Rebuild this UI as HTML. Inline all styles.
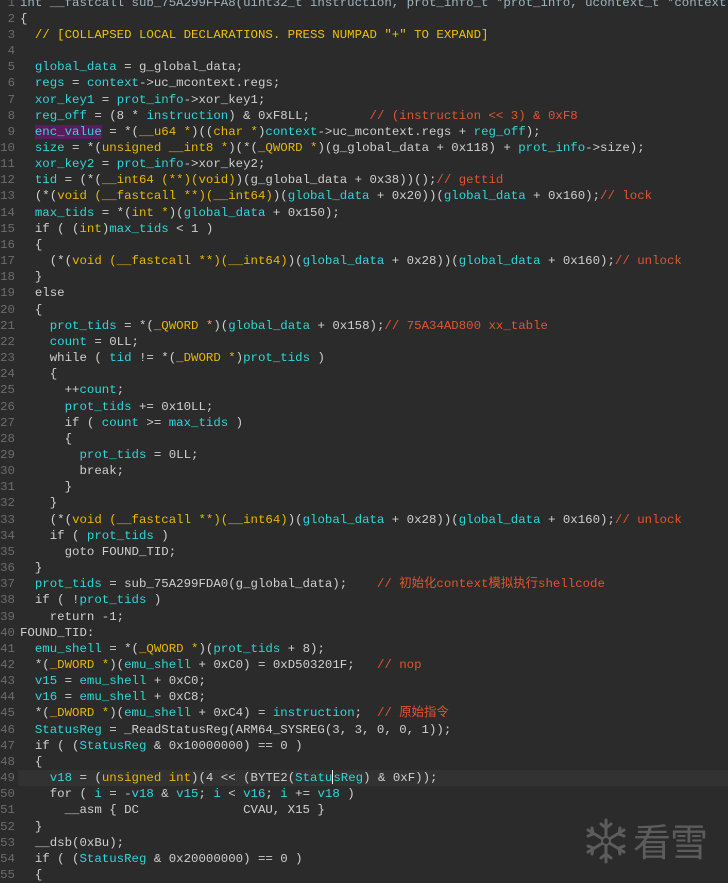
<!DOCTYPE html>
<html><head><meta charset="utf-8"><style>
html,body{margin:0;padding:0;background:#2b2b2b;width:728px;height:882px;overflow:hidden}
.g{position:absolute;left:0;top:-5.4px;width:15px;text-align:right;font:12.4px/16.15px "Liberation Mono",monospace;color:#6c6c6c;white-space:pre}
.code{position:absolute;left:20px;top:-5.4px;font:12.4px/16.15px "Liberation Mono","Noto Sans CJK SC",monospace;color:#cfcfcf;white-space:pre}
.c{color:#2fd6d8}.y{color:#e6b800}.r{color:#e0552f}.k{color:#f0c000}.h{color:#9fb4c0}
.p{background:#5a1c5c}
.hl{position:absolute;left:18px;top:769.9px;width:710px;height:16px;background:#323232}
.cur{display:inline-block;width:0;height:14px;border-left:1px solid #fff;vertical-align:-3px}
</style></head><body>
<div class="hl"></div>
<div class="g">1
2
3
4
5
6
7
8
9
10
11
12
13
14
15
16
17
18
19
20
21
22
23
24
25
26
27
28
29
30
31
32
33
34
35
36
37
38
39
40
41
42
43
44
45
46
47
48
49
50
51
52
53
54
55</div>
<div class="code"><span class="h">int __fastcall sub_75A299FFA8(uint32_t instruction, prot_info_t *prot_info, ucontext_t *context)</span>
{
  <span class="k">// [COLLAPSED LOCAL DECLARATIONS. PRESS NUMPAD "+" TO EXPAND]</span>

  <span class="c">global_data</span> = g_global_data;
  <span class="c">regs</span> = <span class="c">context</span>-&gt;uc_mcontext.regs;
  <span class="c">xor_key1</span> = <span class="c">prot_info</span>-&gt;xor_key1;
  <span class="c">reg_off</span> = (8 * <span class="c">instruction</span>) &amp; 0xF8LL;        <span class="r">// (instruction &lt;&lt; 3) &amp; 0xF8</span>
  <span class="c p">enc_value</span> = *(<span class="y">__u64 *</span>)((<span class="y">char *</span>)<span class="c">context</span>-&gt;uc_mcontext.regs + <span class="c">reg_off</span>);
  <span class="c">size</span> = *(<span class="y">unsigned __int8 *</span>)(*(<span class="y">_QWORD *</span>)(g_global_data + 0x118) + <span class="c">prot_info</span>-&gt;size);
  <span class="c">xor_key2</span> = <span class="c">prot_info</span>-&gt;xor_key2;
  <span class="c">tid</span> = (*(<span class="y">__int64 (**)(void)</span>)(g_global_data + 0x38))();<span class="r">// gettid</span>
  (*(<span class="y">void (__fastcall **)(__int64)</span>)(<span class="c">global_data</span> + 0x20))(<span class="c">global_data</span> + 0x160);<span class="r">// lock</span>
  <span class="c">max_tids</span> = *(<span class="y">int *</span>)(<span class="c">global_data</span> + 0x150);
  if ( (<span class="y">int</span>)<span class="c">max_tids</span> &lt; 1 )
  {
    (*(<span class="y">void (__fastcall **)(__int64)</span>)(<span class="c">global_data</span> + 0x28))(<span class="c">global_data</span> + 0x160);<span class="r">// unlock</span>
  }
  else
  {
    <span class="c">prot_tids</span> = *(<span class="y">_QWORD *</span>)(<span class="c">global_data</span> + 0x158);<span class="r">// 75A34AD800 xx_table</span>
    <span class="c">count</span> = 0LL;
    while ( <span class="c">tid</span> != *(<span class="y">_DWORD *</span>)<span class="c">prot_tids</span> )
    {
      ++<span class="c">count</span>;
      <span class="c">prot_tids</span> += 0x10LL;
      if ( <span class="c">count</span> &gt;= <span class="c">max_tids</span> )
      {
        <span class="c">prot_tids</span> = 0LL;
        break;
      }
    }
    (*(<span class="y">void (__fastcall **)(__int64)</span>)(<span class="c">global_data</span> + 0x28))(<span class="c">global_data</span> + 0x160);<span class="r">// unlock</span>
    if ( <span class="c">prot_tids</span> )
      goto FOUND_TID;
  }
  <span class="c">prot_tids</span> = sub_75A299FDA0(g_global_data);    <span class="r">// 初始化context模拟执行shellcode</span>
  if ( !<span class="c">prot_tids</span> )
    return -1;
FOUND_TID:
  <span class="c">emu_shell</span> = *(<span class="y">_QWORD *</span>)(<span class="c">prot_tids</span> + 8);
  *(<span class="y">_DWORD *</span>)(<span class="c">emu_shell</span> + 0xC0) = 0xD503201F;   <span class="r">// nop</span>
  <span class="c">v15</span> = <span class="c">emu_shell</span> + 0xC0;
  <span class="c">v16</span> = <span class="c">emu_shell</span> + 0xC8;
  *(<span class="y">_DWORD *</span>)(<span class="c">emu_shell</span> + 0xC4) = <span class="c">instruction</span>;  <span class="r">// 原始指令</span>
  <span class="c">StatusReg</span> = _ReadStatusReg(ARM64_SYSREG(3, 3, 0, 0, 1));
  if ( (<span class="c">StatusReg</span> &amp; 0x10000000) == 0 )
  {
    <span class="c">v18</span> = (<span class="y">unsigned int</span>)(4 &lt;&lt; (BYTE2(<span class="c">Statu</span><span class="cur"></span><span class="c">sReg</span>) &amp; 0xF));
    for ( <span class="c">i</span> = -<span class="c">v18</span> &amp; <span class="c">v15</span>; <span class="c">i</span> &lt; <span class="c">v16</span>; <span class="c">i</span> += <span class="c">v18</span> )
      __asm { DC              CVAU, X15 }
  }
  __dsb(0xBu);
  if ( (<span class="c">StatusReg</span> &amp; 0x20000000) == 0 )
  {</div>
<svg style="position:absolute;left:582px;top:817px" width="48" height="48" viewBox="0 0 48 48">
<g stroke="#5c5c5c" stroke-width="3" fill="none" stroke-linecap="round">
<line x1="24" y1="3" x2="24" y2="45"/><line x1="6" y1="13" x2="42" y2="35"/><line x1="6" y1="35" x2="42" y2="13"/>
<polyline points="19,7 24,11 29,7"/><polyline points="19,41 24,37 29,41"/>
<polyline points="6,19 11,17 10,11"/><polyline points="42,29 37,31 38,37"/>
<polyline points="6,29 11,31 10,37"/><polyline points="42,19 37,17 38,11"/>
</g><circle cx="24" cy="24" r="4" fill="#2b2b2b" stroke="#5c5c5c" stroke-width="2"/></svg>
<div style="position:absolute;left:633px;top:816px;font:38px/48px 'Noto Sans CJK SC',sans-serif;color:#5c5c5c;letter-spacing:-1px">看雪</div>
</body></html>
